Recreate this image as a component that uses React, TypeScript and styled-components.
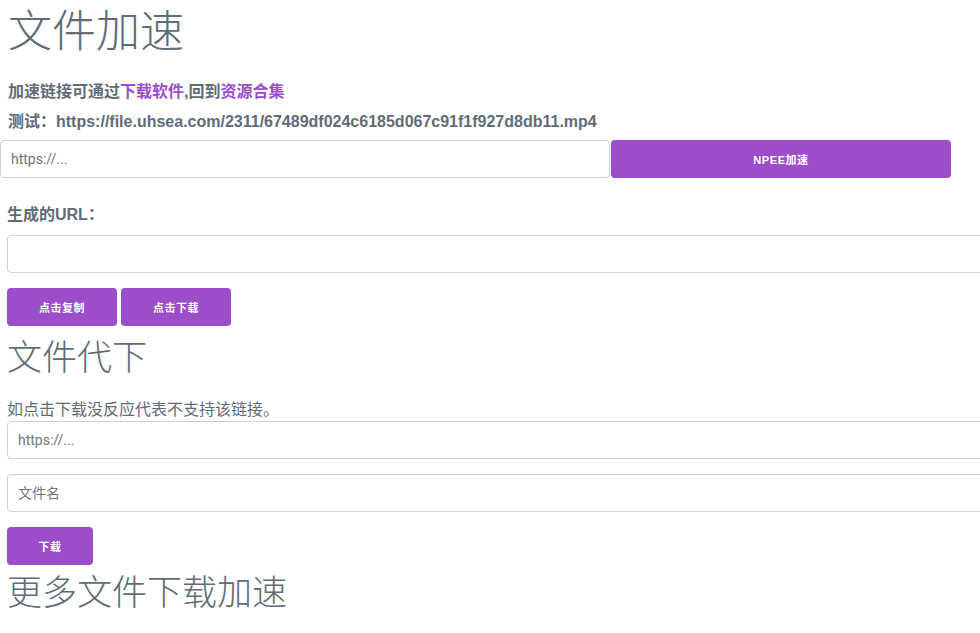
import React from "react";
import styled, { createGlobalStyle } from "styled-components";

const G = createGlobalStyle`
  html, body { margin: 0; overflow-x: hidden; background: #fff; }
  body { font-family: "Liberation Sans", "Noto Sans CJK SC", sans-serif; color: #606c76; }
`;
const Page = styled.div`padding: 0 0 20px 0; width: 1000px;`;
const Section = styled.div`padding-left: ${p => p.$pad ?? 8}px;`;
const H1 = styled.h1`
  margin: 0; font-weight: 300; font-size: ${p => p.$size}px; line-height: 1.2;
  font-family: "Noto Sans CJK SC", sans-serif; color: #606c76; padding-top: ${p => p.$top ?? 0}px;
`;
const Line = styled.p`
  margin: ${p => p.$mt ?? 0}px 0 0 0; font-weight: ${p => p.$bold ? 700 : 400};
  font-size: ${p => p.$fs ?? 16}px; line-height: 24px; color: #606c76;
  font-family: ${p => p.$cjk ? '"Noto Sans CJK SC", sans-serif' : '"Liberation Sans", "Noto Sans CJK SC", sans-serif'};
`;
const A = styled.a`color: #9b4dca; text-decoration: none;`;
const Row = styled.div`display: flex; gap: ${p => p.$gap ?? 1}px; margin-top: ${p => p.$mt ?? 0}px;`;
const Input = styled.input`
  box-sizing: border-box; height: 38px; width: ${p => p.$w}px; border: 1px solid #d1d1d1;
  border-radius: 4px; padding: 6px 10px; font-size: 14px; color: #606c76;
  font-family: "Roboto", "Noto Sans CJK SC", sans-serif; outline: none;
  &::placeholder { color: #6f767c; }
`;
const Btn = styled.button`
  box-sizing: border-box; height: 38px; width: ${p => p.$w}px; background: #9b4dca; border: 0;
  border-radius: 4px; color: #fff; font-weight: 700; font-size: 11px; letter-spacing: 0.05em;
  font-family: "Liberation Sans", "Noto Sans CJK SC", sans-serif; padding: 0;
`;

export default function App() {
  return (
    <Page>
      <G />
      <Section>
        <H1 $size={44} $top={2}>文件加速</H1>
        <Line $bold $mt={25}>加速链接可通过<A>下载软件</A>,回到<A>资源合集</A></Line>
        <Line $bold $mt={6}>测试：https://file.uhsea.com/2311/67489df024c6185d067c91f1f927d8db11.mp4</Line>
      </Section>
      <Row $mt={6}>
        <Input $w={610} placeholder="https://..." />
        <Btn $w={340}>NPEE加速</Btn>
      </Row>
      <Section $pad={7}>
        <Line $bold $mt={25}>生成的URL：</Line>
        <Row $mt={8}><Input $w={990} /></Row>
        <Row $mt={15} $gap={4}>
          <Btn $w={110}>点击复制</Btn>
          <Btn $w={110}>点击下载</Btn>
        </Row>
        <H1 $size={35} $top={8}>文件代下</H1>
        <Line $fs={16} $mt={20} $cjk>如点击下载没反应代表不支持该链接。</Line>
        <Row $mt={1}><Input $w={990} placeholder="https://..." /></Row>
        <Row $mt={15}><Input $w={990} placeholder="文件名" /></Row>
        <Row $mt={15}><Btn $w={86}>下载</Btn></Row>
        <H1 $size={35} $top={4}>更多文件下载加速</H1>
      </Section>
    </Page>
  );
}
